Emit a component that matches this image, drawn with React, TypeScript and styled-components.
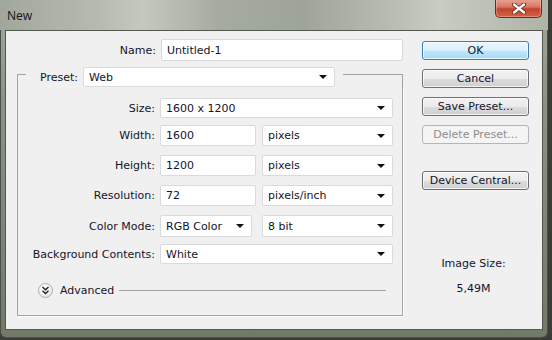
import styled, { createGlobalStyle } from "styled-components";

const GlobalStyle = createGlobalStyle`
  html, body {
    margin: 0;
    padding: 0;
    background: #3a3d37;
  }
  body {
    font-family: "DejaVu Sans", Verdana, sans-serif;
  }
`;

// Window chrome
const Window = styled.div`
  width: 548px;
  height: 338px;
  box-sizing: border-box;
  display: flex;
  flex-direction: column;
  padding: 0 4px 7px 4px;
  border-radius: 0 0 6px 6px;
  border: 1px solid #4a5046;
  border-top: none;
  background: linear-gradient(180deg, #a4a99f 0%, #8b9385 30%, #717a69 100%);
`;

const TitleBar = styled.div`
  height: 30px;
  margin: 0 -5px;
  padding: 0 6px 0 7px;
  display: flex;
  align-items: flex-start;
  justify-content: space-between;
  background: linear-gradient(
    90deg,
    #a2a79c 0%,
    #b6bab0 18%,
    #c4c8be 26%,
    #a6ab9f 40%,
    #9fa499 55%,
    #b9bdb3 72%,
    #c9ccc3 80%,
    #aeb3a8 100%
  );
`;

const Title = styled.span`
  font-family: "Noto Sans", "Open Sans", sans-serif;
  font-size: 12px;
  color: #1b1b1b;
  margin-top: 7px;
`;

const CloseButton = styled.div`
  width: 45px;
  height: 18px;
  margin-top: -1px;
  display: flex;
  align-items: center;
  justify-content: center;
  border: 1px solid #6e2a1c;
  border-top: none;
  border-radius: 0 0 5px 5px;
  background: linear-gradient(180deg, #e9a795 0%, #d77560 45%, #c2432a 55%, #d0644a 100%);
  box-shadow: inset 0 0 0 1px rgba(255, 220, 210, 0.35);
`;

const Client = styled.div`
  flex: 1;
  display: flex;
  background: #f0f0f0;
  border: 1px solid #4f5a4c;
  padding: 8px 0 0 11px;
  color: #14142a;
  font-size: 11px;
`;

// Left form column
const FormColumn = styled.div`
  width: 386px;
  display: flex;
  flex-direction: column;
`;

const Row = styled.div<{ $top?: number }>`
  display: flex;
  align-items: center;
  margin-top: ${({ $top }) => $top ?? 0}px;
`;

const Label = styled.label<{ $width: number }>`
  width: ${({ $width }) => $width}px;
  margin-right: 5px;
  text-align: right;
  white-space: nowrap;
`;

const TextBox = styled.div<{ $width: number; $height?: number }>`
  width: ${({ $width }) => $width}px;
  height: ${({ $height }) => $height ?? 21}px;
  box-sizing: border-box;
  display: flex;
  align-items: center;
  padding-left: 5px;
  background: #fff;
  border: 1px solid #dadada;
  border-radius: 2px;
  white-space: nowrap;
`;

const SelectBox = styled(TextBox)`
  justify-content: space-between;
  padding-right: 7px;
`;

const Caret = styled.span`
  width: 0;
  height: 0;
  border-left: 4px solid transparent;
  border-right: 4px solid transparent;
  border-top: 4px solid #111;
`;

const Gap = styled.span<{ $w: number }>`
  width: ${({ $w }) => $w}px;
  flex: none;
`;

const Group = styled.div`
  display: flex;
  flex-direction: column;
  margin-top: 6px;
`;

const GroupHeader = styled.div`
  display: flex;
  height: 20px;
`;

const Edge = styled.span<{ $side: "left" | "right" }>`
  margin-top: 7px;
  border-top: 1px solid #a3a3a3;
  ${({ $side }) =>
    $side === "left"
      ? "width: 8px; margin-right: 14px; border-left: 1px solid #a3a3a3;"
      : "flex: 1; margin-left: 8px; border-right: 1px solid #a3a3a3;"}
`;

const Legend = styled.span`
  width: 43px;
  align-self: center;
`;

const GroupBody = styled.div`
  display: flex;
  flex-direction: column;
  padding: 10px 0 17px;
  border: 1px solid #a3a3a3;
  border-top: none;
  box-shadow: 1px 1px 0 #fff;
`;

const AdvancedRow = styled.div`
  display: flex;
  align-items: center;
  margin-top: 19px;
  padding: 0 16px 0 20px;
`;

const Expander = styled.span`
  width: 15px;
  height: 15px;
  box-sizing: border-box;
  border-radius: 50%;
  border: 1px solid #b0b0b0;
  background: radial-gradient(circle at 40% 35%, #ffffff 0%, #f3f3f3 50%, #d6d6d6 100%);
  display: flex;
  align-items: center;
  justify-content: center;
  margin-right: 7px;
`;

const Rule = styled.span`
  flex: 1;
  height: 1px;
  margin-left: 5px;
  background: #a3a3a3;
`;

// Right button column
const ButtonColumn = styled.div`
  width: 107px;
  margin-left: 19px;
  padding-top: 2px;
  display: flex;
  flex-direction: column;
`;

const Button = styled.div<{ $variant?: "default" | "disabled"; $top?: number }>`
  height: 19px;
  box-sizing: border-box;
  margin-top: ${({ $top }) => $top ?? 9}px;
  display: flex;
  align-items: center;
  justify-content: center;
  border-radius: 3px;
  border: 1px solid
    ${({ $variant }) =>
      $variant === "default" ? "#3c7fb1" : $variant === "disabled" ? "#b5b5b5" : "#707070"};
  color: ${({ $variant }) => ($variant === "disabled" ? "#8d8d8d" : "#14142a")};
  background: ${({ $variant }) =>
    $variant === "default"
      ? "linear-gradient(180deg, #eaf6fd 0%, #d9f0fc 50%, #bee6fd 51%, #a7d9f5 100%)"
      : $variant === "disabled"
      ? "#f4f4f4"
      : "linear-gradient(180deg, #f2f2f2 0%, #ebebeb 50%, #dddddd 51%, #cfcfcf 100%)"};
  box-shadow: inset 0 0 0 1px
    ${({ $variant }) => ($variant === "disabled" ? "transparent" : "rgba(255,255,255,0.7)")};
`;

const SizeInfo = styled.div`
  margin-top: 67px;
  display: flex;
  flex-direction: column;
  align-items: center;
  gap: 12px;
  padding-right: 4px;
`;

const CloseGlyph = () => (
  <svg width="14" height="11" viewBox="0 0 14 11">
    <path d="M2 1.5 L12 9.5 M12 1.5 L2 9.5" stroke="#5a2016" strokeWidth="4" strokeLinecap="round" />
    <path d="M2 1.5 L12 9.5 M12 1.5 L2 9.5" stroke="#ffffff" strokeWidth="2.4" strokeLinecap="round" />
  </svg>
);

const DoubleChevron = () => (
  <svg width="9" height="9" viewBox="0 0 9 9">
    <path d="M1.5 1 L4.5 3.8 L7.5 1 M1.5 4.8 L4.5 7.6 L7.5 4.8" fill="none" stroke="#222" strokeWidth="1.4" />
  </svg>
);

const Select = ({ width, value, height }: { width: number; value: string; height?: number }) => (
  <SelectBox $width={width} $height={height}>
    <span>{value}</span>
    <Caret />
  </SelectBox>
);

export default function App() {
  return (
    <>
      <GlobalStyle />
      <Window>
        <TitleBar>
          <Title>New</Title>
          <CloseButton>
            <CloseGlyph />
          </CloseButton>
        </TitleBar>
        <Client>
          <FormColumn>
            <Row>
              <Label $width={139}>Name:</Label>
              <TextBox $width={242} $height={22}>Untitled-1</TextBox>
            </Row>

            <Group>
              <GroupHeader>
                <Edge $side="left" />
                <Legend>Preset:</Legend>
                <Select width={252} height={20} value="Web" />
                <Edge $side="right" />
              </GroupHeader>
              <GroupBody>
                <Row $top={1}>
                  <Label $width={137}>Size:</Label>
                  <Select width={233} height={20} value="1600 x 1200" />
                </Row>
                <Row $top={7}>
                  <Label $width={137}>Width:</Label>
                  <TextBox $width={96}>1600</TextBox>
                  <Gap $w={6} />
                  <Select width={131} value="pixels" />
                </Row>
                <Row $top={9}>
                  <Label $width={137}>Height:</Label>
                  <TextBox $width={96}>1200</TextBox>
                  <Gap $w={6} />
                  <Select width={131} value="pixels" />
                </Row>
                <Row $top={9}>
                  <Label $width={137}>Resolution:</Label>
                  <TextBox $width={96}>72</TextBox>
                  <Gap $w={6} />
                  <Select width={131} value="pixels/inch" />
                </Row>
                <Row $top={9}>
                  <Label $width={137}>Color Mode:</Label>
                  <Select width={92} height={22} value="RGB Color" />
                  <Gap $w={10} />
                  <Select width={131} height={22} value="8 bit" />
                </Row>
                <Row $top={7}>
                  <Label $width={137}>Background Contents:</Label>
                  <Select width={233} height={20} value="White" />
                </Row>
                <AdvancedRow>
                  <Expander>
                    <DoubleChevron />
                  </Expander>
                  <span>Advanced</span>
                  <Rule />
                </AdvancedRow>
              </GroupBody>
            </Group>
          </FormColumn>

          <ButtonColumn>
            <Button $variant="default" $top={0}>OK</Button>
            <Button>Cancel</Button>
            <Button>Save Preset...</Button>
            <Button $variant="disabled">Delete Preset...</Button>
            <Button $top={27}>Device Central...</Button>
            <SizeInfo>
              <span>Image Size:</span>
              <span>5,49M</span>
            </SizeInfo>
          </ButtonColumn>
        </Client>
      </Window>
    </>
  );
}
